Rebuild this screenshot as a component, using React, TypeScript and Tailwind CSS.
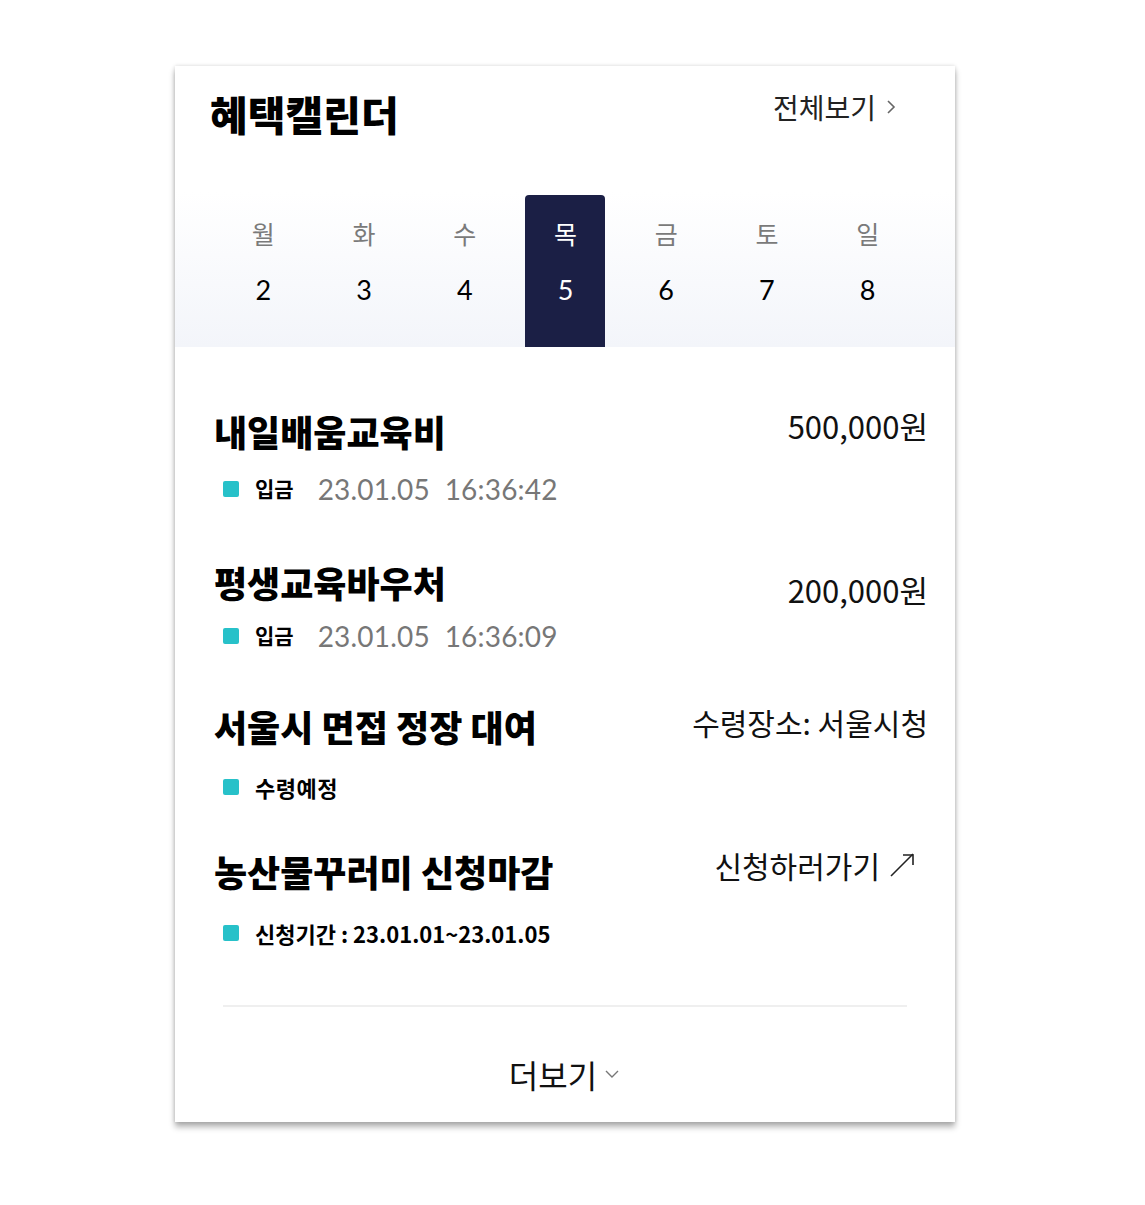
import React from 'react';

const days = [
  { label: '월', date: '2' },
  { label: '화', date: '3' },
  { label: '수', date: '4' },
  { label: '목', date: '5', active: true },
  { label: '금', date: '6' },
  { label: '토', date: '7' },
  { label: '일', date: '8' },
];

const kr = "font-['Noto_Sans_CJK_KR','Noto_Sans',sans-serif]";
const lato = "font-['Lato','Noto_Sans_CJK_KR',sans-serif]";

function Square() {
  return <span className="w-[16px] h-[16px] bg-[#27c1c9] rounded-[2px] shrink-0" />;
}

function ArrowUpRight() {
  return (
    <svg className="w-[28px] h-[28px] ml-[8px]" viewBox="0 0 28 28" fill="none" stroke="#222" strokeWidth={1.6}>
      <path d="M3 25L25 3" />
      <path d="M15 4h10v10" strokeLinejoin="miter" />
    </svg>
  );
}

export default function App() {
  return (
    <div className="min-h-[1205px] bg-white pl-[175px] pt-[66px]">
      <div className={`w-[780px] h-[1056px] bg-white flex flex-col shadow-[0_5px_6px_rgba(0,0,0,0.3),0_0_4px_rgba(0,0,0,0.15)] ${kr}`}>
        {/* header */}
        <div className="h-[126px] flex justify-between items-start pl-[35px] pr-[57px] pt-[22px]">
          <h1 className="text-[41px] leading-[50px] font-black text-black">혜택캘린더</h1>
          <div className="mt-[3px] flex items-center text-[28px] leading-[32px] text-[#222]">
            전체보기
            <svg className="w-[14px] h-[18px] ml-[8px]" viewBox="0 0 14 18" fill="none" stroke="#666" strokeWidth={1.6}>
              <path d="M4 3l6 6-6 6" />
            </svg>
          </div>
        </div>

        {/* week strip */}
        <div className="h-[155px] bg-gradient-to-b from-white to-[#f3f5fa] pl-[38px]">
          <div className="grid grid-cols-7 w-[705px] h-full">
            {days.map((d) => (
              <div key={d.label} className="flex justify-center h-full">
                <div
                  className={`w-[80px] mt-[3px] h-[152px] flex flex-col items-center rounded-t-[4px] ${
                    d.active ? 'bg-[#1b1f45] text-white' : 'text-black'
                  }`}
                >
                  <span className={`mt-[21px] text-[25px] leading-[34px] ${d.active ? 'text-white' : 'text-[#7a7a7a]'}`}>
                    {d.label}
                  </span>
                  <span className={`mt-[23px] text-[27px] leading-[34px] ${lato}`}>{d.date}</span>
                </div>
              </div>
            ))}
          </div>
        </div>

        {/* items */}
        <div className="pl-[39px] pr-[27px]">
          {/* item 1 */}
          <div className="pt-[62px]">
            <div className="flex justify-between items-start h-[44px]">
              <span className="text-[36px] leading-[44px] font-black text-black">내일배움교육비</span>
              <span className="text-[31px] leading-[40px] text-[#111] -mt-[3px]">500,000원</span>
            </div>
            <div className="flex items-center h-[30px] mt-[21px] pl-[9px]">
              <Square />
              <span className="ml-[16px] text-[21px] font-bold text-black">입금</span>
              <span className={`ml-[24px] text-[28px] text-[#777] whitespace-pre tracking-[0.2px] ${lato}`}>23.01.05  16:36:42</span>
            </div>
          </div>

          {/* item 2 */}
          <div className="pt-[56px]">
            <div className="flex justify-between items-start h-[44px]">
              <span className="text-[36px] leading-[44px] font-black text-black">평생교육바우처</span>
              <span className="text-[31px] leading-[40px] text-[#111] mt-[10px]">200,000원</span>
            </div>
            <div className="flex items-center h-[30px] mt-[17px] pl-[9px]">
              <Square />
              <span className="ml-[16px] text-[21px] font-bold text-black">입금</span>
              <span className={`ml-[24px] text-[28px] text-[#777] whitespace-pre tracking-[0.2px] ${lato}`}>23.01.05  16:36:09</span>
            </div>
          </div>

          {/* item 3 */}
          <div className="pt-[53px]">
            <div className="flex justify-between items-start h-[44px]">
              <span className="text-[36px] leading-[44px] font-black text-black">서울시 면접 정장 대여</span>
              <span className="text-[30px] leading-[40px] text-[#111] -mt-[2px]">수령장소: 서울시청</span>
            </div>
            <div className="flex items-center h-[30px] mt-[24px] pl-[9px]">
              <Square />
              <span className="ml-[16px] text-[22px] font-bold text-black tracking-[0.5px]">수령예정</span>
            </div>
          </div>

          {/* item 4 */}
          <div className="pt-[47px]">
            <div className="flex justify-between items-start h-[44px]">
              <span className="text-[36px] leading-[44px] font-black text-black">농산물꾸러미 신청마감</span>
              <span className="flex items-center text-[30px] leading-[40px] text-[#111] -mt-[4px] mr-[12px]">
                신청하러가기
                <ArrowUpRight />
              </span>
            </div>
            <div className="flex items-center h-[30px] mt-[25px] pl-[9px]">
              <Square />
              <span className="ml-[16px] text-[22px] font-bold text-black">신청기간 : 23.01.01~23.01.05</span>
            </div>
          </div>
        </div>

        {/* divider */}
        <div className="mx-[48px] mt-[57px] h-[2px] bg-[#efefef]" />

        {/* more */}
        <div className="flex-1 flex items-center justify-center">
          <span className="flex items-center text-[32px] text-[#111] mt-[18px]">
            더보기
            <svg className="w-[18px] h-[14px] ml-[6px]" viewBox="0 0 18 14" fill="none" stroke="#777" strokeWidth={1.4}>
              <path d="M3 4l6 6 6-6" />
            </svg>
          </span>
        </div>
      </div>
    </div>
  );
}
